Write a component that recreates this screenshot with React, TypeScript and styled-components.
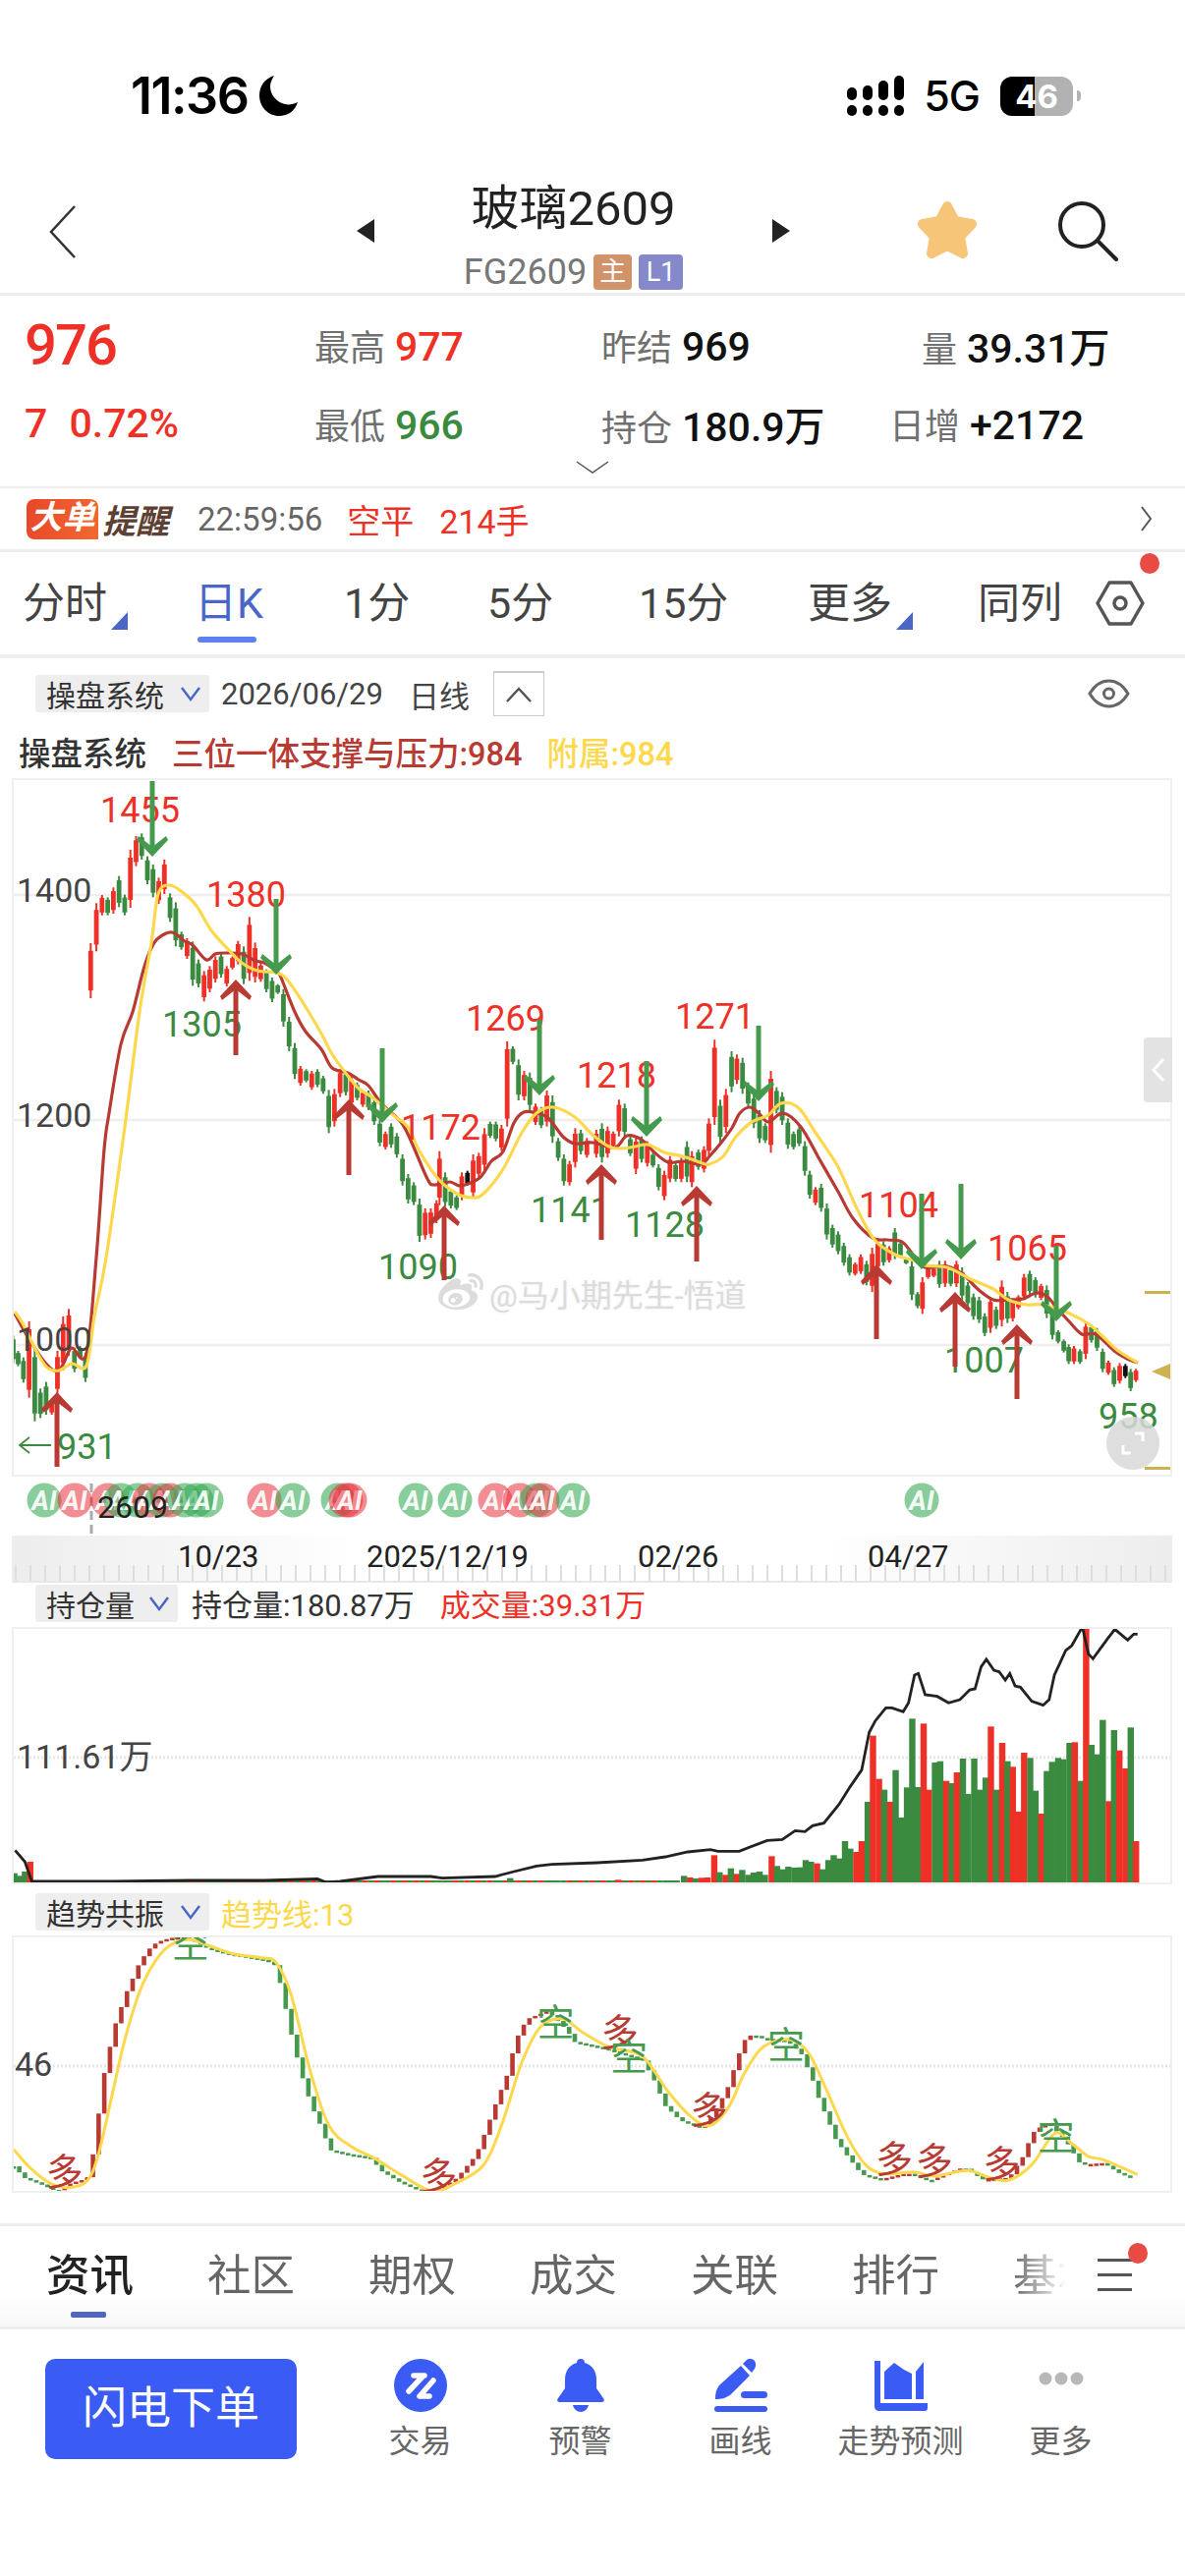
import React from 'react'
import styled, { createGlobalStyle } from 'styled-components'
import { FaWeibo } from 'react-icons/fa'

const RED = '#ee3026'
const GREEN = '#3a8a40'
const ARROW_RED = '#b83a33'
const ARROW_GREEN = '#459a4d'
const YELLOW = '#fdd84d'
const BLUE = '#3a5cf5'
const LINE = '#eeeeee'
const FONT = `Roboto, "Noto Sans CJK SC", sans-serif`

const GlobalStyle = createGlobalStyle`
  html, body { margin: 0; padding: 0; background: #fff; }
  body { font-family: ${FONT}; }
`

type Row = [string, number, number, number]
type Pt = [number, number]

const barColor = (c: string) => (c === 'r' ? RED : c === 'g' ? GREEN : '#111')

// candles read off the chart, [colour, x, top, bottom] in crop units
const part1: Row[] = [
  ['g', 35, 238, 322], ['g', 48, 285, 332], ['g', 62, 305, 382], ['r', 77, 195, 428],
  ['g', 92, 280, 500], ['g', 107, 400, 490], ['g', 122, 380, 480], ['r', 137, 430, 480],
  ['r', 152, 285, 420], ['r', 167, 180, 345], ['r', 182, 157, 300], ['g', 197, 275, 350],
  ['g', 212, 270, 310], ['g', 226, 290, 380],
]
const part2: Row[] = [
  ['r', 240, 540, 708], ['r', 255, 418, 565], ['r', 270, 393, 455], ['g', 285, 400, 455],
  ['r', 300, 370, 450], ['g', 315, 335, 430], ['g', 330, 392, 455], ['r', 345, 255, 432],
  ['r', 360, 213, 305], ['g', 375, 205, 285], ['g', 390, 275, 360], ['g', 405, 300, 400],
  ['r', 420, 340, 420], ['r', 435, 285, 390], ['g', 450, 388, 475], ['g', 465, 415, 550],
  ['g', 480, 505, 560], ['r', 495, 525, 588], ['g', 510, 535, 670], ['g', 525, 590, 675],
  ['r', 540, 625, 718], ['r', 555, 610, 690], ['r', 570, 580, 660], ['g', 585, 570, 645],
  ['r', 600, 610, 672], ['r', 615, 580, 620], ['r', 630, 533, 605], ['g', 645, 550, 665],
  ['r', 660, 460, 655], ['r', 675, 538, 660], ['r', 690, 600, 658], ['g', 705, 620, 690],
  ['g', 720, 645, 720], ['g', 735, 665, 695], ['g', 750, 680, 795], ['g', 765, 765, 870],
  ['g', 780, 845, 955], ['r', 795, 915, 975], ['g', 810, 925, 965], ['r', 825, 930, 988],
  ['g', 840, 925, 980], ['g', 855, 945, 1000], ['g', 870, 988, 1120], ['r', 885, 985, 1100],
  ['r', 900, 925, 1010], ['g', 915, 930, 1005], ['r', 930, 945, 1040], ['g', 945, 965, 1020],
  ['r', 960, 990, 1040], ['g', 975, 990, 1050], ['g', 990, 1015, 1095], ['g', 1005, 1080, 1160],
  ['r', 1020, 1115, 1170], ['g', 1035, 1090, 1165], ['g', 1050, 1120, 1195], ['g', 1065, 1185, 1280],
  ['g', 1080, 1245, 1335], ['g', 1095, 1270, 1340], ['g', 1110, 1320, 1452], ['r', 1125, 1350, 1445],
  ['r', 1140, 1350, 1440], ['r', 1155, 1325, 1395], ['r', 1163, 1175, 1340], ['g', 1178, 1240, 1345],
  ['g', 1193, 1290, 1350], ['g', 1208, 1310, 1355], ['r', 1222, 1240, 1325], ['k', 1237, 1235, 1280],
  ['r', 1252, 1185, 1320], ['r', 1267, 1180, 1255], ['r', 1282, 1105, 1235], ['g', 1297, 1085, 1135],
  ['g', 1312, 1085, 1145], ['r', 1327, 1095, 1175], ['r', 1342, 840, 1100], ['g', 1357, 855, 910],
  ['g', 1372, 895, 1020], ['r', 1387, 930, 1020], ['g', 1402, 935, 1050], ['r', 1417, 1030, 1095],
  ['g', 1432, 1040, 1105], ['r', 1447, 990, 1100], ['g', 1462, 1005, 1150], ['g', 1477, 1135, 1205],
  ['g', 1492, 1185, 1280], ['r', 1507, 1205, 1280], ['r', 1522, 1105, 1225], ['g', 1537, 1110, 1185],
  ['r', 1553, 1135, 1195],
]
const part3: Row[] = [
  ['r', 10, 1110, 1195], ['g', 25, 1090, 1210], ['r', 40, 1100, 1195], ['r', 55, 1115, 1165],
  ['r', 70, 1018, 1130], ['g', 85, 1030, 1130], ['g', 100, 1130, 1190], ['r', 115, 1130, 1245],
  ['g', 130, 1130, 1210], ['r', 145, 1145, 1222], ['g', 160, 1180, 1225], ['g', 175, 1215, 1295],
  ['r', 190, 1235, 1325], ['r', 205, 1190, 1270], ['g', 220, 1210, 1268], ['r', 235, 1195, 1270],
  ['g', 250, 1145, 1270], ['r', 263, 1175, 1285], ['g', 280, 1170, 1232], ['r', 295, 1160, 1240],
  ['r', 308, 1075, 1190], ['r', 323, 835, 1095], ['g', 338, 1018, 1150], ['r', 353, 985, 1120],
  ['g', 368, 870, 995], ['r', 382, 880, 970], ['g', 397, 890, 1000], ['g', 412, 965, 1040],
  ['g', 427, 1000, 1105], ['g', 442, 1050, 1150], ['g', 457, 1090, 1150], ['r', 472, 930, 1180],
  ['g', 487, 980, 1060], ['g', 502, 995, 1095], ['g', 517, 1075, 1168], ['g', 532, 1115, 1170],
  ['g', 547, 1100, 1160], ['g', 562, 1145, 1250], ['g', 575, 1235, 1320], ['r', 590, 1285, 1340],
  ['g', 605, 1275, 1360], ['g', 620, 1335, 1445], ['g', 635, 1400, 1470], ['g', 650, 1420, 1490],
]
const part4: Row[] = [
  ['g', 665, -45, 25], ['g', 680, -10, 55], ['r', 695, 15, 55], ['r', 710, -10, 50],
  ['g', 725, 10, 85], ['r', 740, -30, 105], ['r', 755, -55, 40], ['g', 770, -50, 25],
  ['r', 785, -35, 15], ['g', 800, -90, 5], ['g', 815, -50, 0], ['g', 830, 0, 20],
  ['g', 845, 10, 130], ['g', 860, 105, 155], ['r', 873, 60, 172], ['r', 888, 25, 65],
  ['r', 903, 30, 60], ['g', 918, 10, 92], ['r', 933, 10, 90], ['g', 948, 30, 88],
  ['r', 963, 10, 90], ['g', 978, 30, 130], ['g', 993, 75, 150], ['g', 1008, 110, 190],
  ['g', 1023, 120, 200], ['g', 1038, 170, 240], ['r', 1053, 120, 230], ['g', 1068, 150, 218],
  ['r', 1083, 70, 210], ['g', 1098, 105, 200], ['r', 1112, 125, 195], ['r', 1127, 115, 158],
  ['r', 1142, 50, 130], ['g', 1157, 40, 112], ['g', 1172, 60, 122], ['r', 1187, 80, 130],
  ['g', 1202, 85, 185], ['g', 1217, 150, 250], ['g', 1232, 222, 262], ['g', 1247, 250, 290],
  ['g', 1260, 265, 325], ['r', 1274, 270, 325], ['g', 1290, 280, 325], ['r', 1305, 195, 310],
  ['g', 1320, 205, 260], ['g', 1335, 215, 285], ['g', 1350, 278, 350], ['r', 1365, 315, 358],
  ['g', 1380, 335, 395], ['r', 1395, 322, 385], ['k', 1410, 325, 368], ['g', 1424, 340, 408],
  ['r', 1438, 340, 380],
]

const toCandles = (rows: Row[], x0: number, y0: number) =>
  rows.map(([c, x, t, b]) => ({ c, x: x0 + x / 2.6, t: y0 + t / 3, b: y0 + b / 3 }))

const candles = [
  ...toCandles(part1, 0, 1280),
  ...toCandles(part2, 0, 780),
  ...toCandles(part3, 603, 780),
  ...toCandles(part4, 603, 1280),
]

const redMa: Pt[] = [
  [15, 1337], [29, 1362], [46, 1387], [58, 1396], [65, 1387], [73, 1372], [88, 1378], [98, 1280],
  [106, 1170], [111, 1133], [123, 1063], [135, 1030], [146, 987], [154, 965], [161, 955], [175, 949],
  [188, 958], [196, 962], [210, 977], [219, 971], [231, 970], [246, 971], [260, 978], [269, 980],
  [283, 990], [288, 1000], [300, 1030], [311, 1050], [327, 1068], [338, 1087], [354, 1092], [365, 1099],
  [375, 1105], [388, 1123], [408, 1142], [419, 1163], [435, 1200], [442, 1206], [458, 1203], [469, 1207],
  [488, 1199], [500, 1182], [512, 1172], [523, 1143], [533, 1132], [546, 1133], [558, 1138], [573, 1157],
  [585, 1164], [603, 1163], [626, 1168], [638, 1156], [653, 1160], [666, 1173], [680, 1183], [695, 1182],
  [713, 1185], [722, 1177], [734, 1163], [745, 1148], [753, 1133], [763, 1127], [772, 1133], [782, 1142],
  [797, 1133], [815, 1147], [834, 1180], [853, 1213], [868, 1240], [888, 1260], [903, 1262], [918, 1264],
  [930, 1278], [941, 1290], [964, 1289], [980, 1297], [995, 1312], [1011, 1323], [1026, 1323], [1041, 1322],
  [1055, 1316], [1066, 1320], [1076, 1332], [1088, 1345], [1101, 1358], [1115, 1358], [1134, 1375], [1147, 1383],
  [1158, 1387],
]

const yellowMa: Pt[] = [
  [15, 1335], [23, 1347], [38, 1377], [48, 1392], [60, 1395], [73, 1388], [88, 1390], [96, 1340],
  [108, 1280], [127, 1147], [142, 1030], [154, 960], [161, 910], [173, 901], [188, 910], [200, 922],
  [215, 947], [231, 965], [246, 980], [262, 988], [281, 990], [292, 997], [308, 1020], [327, 1052],
  [338, 1073], [354, 1095], [365, 1108], [379, 1117], [400, 1135], [415, 1147], [427, 1172], [446, 1200],
  [465, 1215], [481, 1219], [492, 1215], [512, 1190], [531, 1153], [546, 1133], [563, 1127], [585, 1137],
  [603, 1155], [622, 1168], [641, 1168], [659, 1165], [676, 1173], [695, 1177], [715, 1184], [722, 1185],
  [736, 1177], [749, 1157], [765, 1142], [782, 1135], [795, 1123], [813, 1128], [830, 1153], [853, 1188],
  [872, 1230], [890, 1262], [911, 1277], [930, 1283], [941, 1288], [964, 1290], [988, 1302], [1011, 1312],
  [1026, 1323], [1045, 1328], [1061, 1328], [1084, 1335], [1107, 1347], [1122, 1360], [1138, 1375], [1158, 1387],
]

const smooth = (pts: Pt[]) => {
  let d = `M${pts[0][0]} ${pts[0][1]}`
  for (let i = 0; i < pts.length - 1; i++) {
    const p0 = pts[Math.max(i - 1, 0)]
    const p1 = pts[i]
    const p2 = pts[i + 1]
    const p3 = pts[Math.min(i + 2, pts.length - 1)]
    const c1x = p1[0] + (p2[0] - p0[0]) / 6
    const c1y = p1[1] + (p2[1] - p0[1]) / 6
    const c2x = p2[0] - (p3[0] - p1[0]) / 6
    const c2y = p2[1] - (p3[1] - p1[1]) / 6
    d += `C${c1x.toFixed(1)} ${c1y.toFixed(1)} ${c2x.toFixed(1)} ${c2y.toFixed(1)} ${p2[0]} ${p2[1]}`
  }
  return d
}

const downArrows = [
  [155, 795, 872], [281, 915, 992], [389, 1067, 1143], [549, 1038, 1115], [658, 1080, 1157],
  [772, 1044, 1121], [938, 1215, 1292], [978, 1205, 1282], [1075, 1268, 1345],
]
const upArrows = [
  [58, 1417, 1493], [240, 997, 1074], [355, 1119, 1196], [452, 1227, 1303], [612, 1185, 1262],
  [709, 1207, 1284], [892, 1287, 1363], [972, 1315, 1391], [1035, 1348, 1424],
]
const priceLabels: [string, number, number, boolean][] = [
  ['1455', 102, 837, true], ['1380', 210, 923, true], ['1305', 165, 1055, false], ['1269', 474, 1049, true],
  ['1172', 408, 1160, true], ['1090', 385, 1302, false], ['1141', 540, 1244, false], ['1218', 587, 1107, true],
  ['1271', 687, 1047, true], ['1128', 636, 1259, false], ['1104', 874, 1239, true], ['1065', 1005, 1283, true],
  ['1007', 961, 1397, false], ['958', 1118, 1454, false], ['931', 58, 1485, false],
]

const aiMarks: [number, boolean][] = [
  [45, true], [76, false], [110, false], [123, true], [140, true], [152, false], [165, true], [173, false],
  [188, true], [200, true], [210, true], [269, false], [298, true], [344, true], [352, false], [356, false],
  [423, true], [463, true], [504, false], [529, false], [546, true], [552, false], [583, true], [938, true],
]

// volume bars, [colour, x, top] in crop units
const volumeBars: [string, number, number][] = [
  ['g', 19, 860], ['g', 26, 868], ['g', 33, 855], ['r', 40, 825], ['g', 675, 875], ['r', 818, 880], ['g', 905, 868],
  ['r', 913, 873], ['g', 920, 876], ['r', 928, 874], ['r', 936, 873], ['r', 945, 805], ['g', 952, 857], ['r', 960, 865],
  ['g', 967, 845], ['r', 975, 862], ['g', 982, 850], ['g', 990, 865], ['g', 997, 858], ['g', 1005, 855],
  ['g', 1012, 865], ['r', 1021, 808], ['g', 1028, 838], ['g', 1036, 848], ['g', 1043, 840], ['g', 1051, 843],
  ['g', 1058, 842], ['g', 1066, 820], ['g', 1073, 825], ['r', 1081, 830], ['g', 1088, 848], ['g', 1096, 820],
  ['g', 1103, 805], ['g', 1110, 815], ['g', 1118, 762], ['g', 1125, 785], ['r', 1133, 795], ['r', 1140, 762],
  ['g', 1148, 642], ['r', 1155, 440], ['r', 1163, 572], ['g', 1170, 605], ['r', 1178, 642], ['g', 1185, 545],
  ['g', 1192, 690], ['g', 1200, 598], ['g', 1207, 388], ['g', 1214, 597], ['r', 1222, 403], ['r', 1229, 605],
  ['g', 1237, 522], ['g', 1244, 518], ['r', 1252, 578], ['g', 1259, 585], ['r', 1266, 552], ['g', 1274, 510],
  ['g', 1281, 618], ['g', 1289, 510], ['g', 1296, 605], ['g', 1304, 568], ['r', 1311, 412], ['g', 1318, 605],
  ['r', 1326, 462], ['g', 1333, 518], ['r', 1340, 535], ['r', 1348, 672], ['r', 1355, 492], ['g', 1363, 508],
  ['g', 1370, 608], ['r', 1378, 678], ['g', 1385, 548], ['g', 1392, 520], ['g', 1400, 508], ['g', 1407, 512],
  ['g', 1415, 462], ['r', 1422, 460], ['g', 1430, 578], ['r', 1437, 112], ['g', 1444, 468], ['g', 1452, 497],
  ['g', 1459, 392], ['r', 1467, 640], ['g', 1474, 423], ['r', 1481, 485], ['r', 1489, 540], ['g', 1496, 415],
  ['r', 1503, 762],
]

const tinyBars = Array.from({ length: 115 }, (_, i) => ({
  x: (48 + i * 7.5) / 1.3,
  c: (i * 7 + (i >> 2)) % 5 < 2 ? 'r' : 'g',
})).filter((b) => b.x < 692)

const holdLine: Pt[] = [
  [20, 790], [33, 825], [42, 885], [150, 885], [250, 882], [350, 882], [420, 877], [432, 888], [450, 885],
  [500, 870], [570, 870], [585, 875], [655, 870], [680, 855], [710, 838], [730, 833], [790, 828], [850, 820],
  [880, 810], [910, 795], [940, 788], [950, 793], [978, 793], [1015, 760], [1035, 757], [1052, 730], [1065, 733],
  [1075, 715], [1090, 707], [1110, 650], [1125, 595], [1140, 545], [1150, 430], [1158, 395], [1172, 355],
  [1180, 355], [1195, 367], [1202, 340], [1210, 255], [1215, 250], [1224, 315], [1240, 320], [1255, 340],
  [1270, 330], [1283, 300], [1290, 297], [1298, 230], [1305, 207], [1315, 240], [1322, 245], [1330, 270],
  [1336, 250], [1343, 288], [1350, 292], [1365, 335], [1380, 347], [1388, 330], [1395, 255], [1402, 220],
  [1410, 180], [1418, 165], [1432, 108], [1440, 190], [1446, 205], [1465, 145], [1475, 115], [1492, 148],
  [1500, 130], [1505, 130],
]

const trendCurve: Pt[] = [
  [18, 855], [32, 890], [55, 910], [75, 932], [95, 905], [115, 893], [125, 800], [132, 665], [138, 570], [145, 495],
  [152, 425], [160, 372], [167, 325], [175, 285], [182, 245], [190, 215], [198, 190], [208, 170], [225, 158], [240, 155],
  [255, 165], [275, 190], [300, 205], [320, 212], [345, 222], [362, 235], [368, 270], [375, 340], [382, 420], [390, 495],
  [397, 560], [405, 620], [412, 670], [420, 710], [428, 750], [435, 805], [460, 818], [490, 828], [505, 870], [530, 905],
  [555, 930], [575, 935], [605, 890], [630, 820], [642, 750], [650, 700], [658, 650], [665, 610], [672, 570], [680, 490],
  [688, 440], [698, 405], [725, 380], [750, 440], [760, 475], [800, 495], [850, 530], [865, 590], [880, 670], [900, 715],
  [930, 740], [945, 690], [962, 620], [970, 565], [978, 510], [985, 470], [995, 452], [1010, 465], [1040, 470], [1060, 510],
  [1075, 590], [1085, 660], [1095, 710], [1105, 770], [1120, 820], [1140, 880], [1165, 895], [1200, 875], [1230, 900],
  [1255, 875], [1275, 858], [1300, 895], [1335, 890], [1355, 820], [1365, 755], [1385, 720], [1408, 770], [1430, 850],
  [1460, 845], [1480, 875], [1505, 900],
]

const trendYellow: Pt[] = [
  [18, 803], [40, 860], [65, 905], [90, 920], [115, 900], [130, 820], [150, 620], [165, 470], [185, 320], [205, 230],
  [225, 180], [250, 163], [275, 180], [310, 207], [345, 218], [365, 232], [385, 330], [410, 560], [435, 730], [465, 795],
  [495, 830], [530, 880], [570, 930], [600, 910], [640, 850], [665, 720], [690, 540], [715, 430], [745, 405], [770, 445],
  [805, 490], [835, 505], [855, 530], [885, 630], [915, 705], [940, 730], [965, 670], [985, 570], [1010, 490], [1045, 468],
  [1070, 510], [1095, 630], [1120, 760], [1145, 850], [1170, 878], [1210, 872], [1235, 885], [1280, 868], [1310, 890],
  [1335, 897], [1365, 850], [1395, 755], [1415, 780], [1440, 825], [1460, 835], [1505, 880],
]

const curveAt = (x: number) => {
  for (let i = 0; i < trendCurve.length - 1; i++) {
    const [x1, y1] = trendCurve[i]
    const [x2, y2] = trendCurve[i + 1]
    if (x >= x1 && x <= x2) return y1 + ((y2 - y1) * (x - x1)) / (x2 - x1)
  }
  return trendCurve[trendCurve.length - 1][1]
}

const trendSteps = Array.from({ length: 198 }, (_, i) => {
  const X = 18 + i * 7.5
  const cur = curveAt(X)
  const prev = curveAt(Math.max(X - 7.5, 18))
  return { x: X / 1.3, top: 1920 + Math.min(cur, prev) / 3, h: Math.abs(cur - prev) / 3, up: cur < prev }
})

const trendMarks: [string, number, number][] = [
  ['多', 85, 862], ['多', 580, 875], ['多', 820, 435], ['多', 938, 672], ['多', 1183, 822], ['多', 1236, 830], ['多', 1325, 838],
  ['空', 252, 165], ['空', 735, 405], ['空', 832, 510], ['空', 1040, 475], ['空', 1397, 755],
]

const toPage = (pts: Pt[], y0: number): Pt[] => pts.map(([x, y]) => [x / 1.3, y0 + y / 3])

const Page = styled.div`
  position: relative;
  width: 1206px;
  height: 2622px;
  background: #fff;
  overflow: hidden;
  color: #222;
`

/* status bar */
const StatusBar = styled.div`
  height: 130px;
  box-sizing: border-box;
  padding: 77px 114px 0 133px;
  display: flex;
  justify-content: space-between;
`
const TimeGroup = styled.div`
  display: flex;
  align-items: center;
  height: 41px;
  gap: 12px;
`
const Clock = styled.span`
  font: 600 52px/41px Inter, sans-serif;
  letter-spacing: -1.5px;
  color: #000;
`
const StatusIcons = styled.div`
  display: flex;
  align-items: center;
  height: 41px;
`
const FiveG = styled.span`
  font: 500 43px/41px Inter, sans-serif;
  letter-spacing: -1px;
  margin: 0 21px 0 20px;
  color: #000;
`
const Battery = styled.div`
  position: relative;
  width: 74px;
  height: 40px;
  border-radius: 12px;
  background: linear-gradient(90deg, #000 0, #000 47%, #b2b2b2 47%, #b2b2b2 100%);
  color: #fff;
  font: 700 33px/40px Inter, sans-serif;
  text-align: center;
  &::after {
    content: '';
    position: absolute;
    left: 78px;
    top: 14px;
    width: 4px;
    height: 11px;
    border-radius: 0 5px 5px 0;
    background: #b2b2b2;
  }
`

/* navigation */
const NavBar = styled.div`
  height: 168px;
  border-bottom: 3px solid ${LINE};
  display: grid;
  grid-template-columns: 363px 441px 1fr;
  align-items: start;
`
const NavLeft = styled.div`
  padding: 78px 0 0 50px;
`
const NavCentre = styled.div`
  display: flex;
  justify-content: space-between;
  padding-top: 93px;
`
const TitleBlock = styled.div`
  margin-top: -40px;
  display: flex;
  flex-direction: column;
  align-items: center;
`
const Title = styled.div`
  font-size: 49px;
  line-height: 60px;
  color: #222;
  white-space: nowrap;
`
const SubTitle = styled.div`
  display: flex;
  align-items: center;
  gap: 4px;
  height: 38px;
  margin-top: 15px;
  font-size: 36px;
  color: #777;
`
const Badge = styled.span<{ $bg: string; $w: number }>`
  width: ${(p) => p.$w}px;
  height: 36px;
  margin-left: 3px;
  border-radius: 4px;
  background: ${(p) => p.$bg};
  color: #fff;
  font-size: 27px;
  line-height: 36px;
  text-align: center;
`
const NavRight = styled.div`
  display: flex;
  align-items: flex-start;
  gap: 81px;
  padding: 74px 0 0 129px;
`

/* quote */
const Quote = styled.div`
  height: 194px;
  border-bottom: 2px solid ${LINE};
  position: relative;
`
const QuoteRow = styled.div<{ $h: number }>`
  display: grid;
  grid-template-columns: 295px 292px 293px 1fr;
  padding-left: 25px;
  height: ${(p) => p.$h}px;
  align-items: center;
  white-space: nowrap;
`
const Price = styled.span`
  font-size: 58px;
  font-weight: 500;
  letter-spacing: -2px;
  color: ${RED};
`
const Change = styled.span`
  font-size: 41px;
  font-weight: 500;
  color: ${RED};
  word-spacing: 12px;
`
const Stat = styled.div<{ $indent?: number }>`
  margin-left: ${(p) => p.$indent ?? 0}px;
  display: flex;
  align-items: baseline;
  gap: 10px;
`
const StatLabel = styled.span`
  font-size: 36px;
  color: #707070;
`
const StatValue = styled.span<{ $tone?: string }>`
  font-size: 41px;
  font-weight: 500;
  color: ${(p) => p.$tone ?? '#111'};
`
const MoreChevron = styled.div`
  display: flex;
  justify-content: center;
  padding-top: 16px;
`

/* alert */
const AlertRow = styled.div`
  height: 62px;
  border-bottom: 3px solid ${LINE};
  display: flex;
  align-items: center;
  padding: 0 33px 0 27px;
`
const AlertBadge = styled.span`
  width: 73px;
  height: 41px;
  line-height: 38px;
  text-align: center;
  border-radius: 8px 8px 0 8px;
  background: linear-gradient(100deg, #e8472a, #f2692f);
  color: #fff;
  font-size: 33px;
  font-weight: 700;
  font-style: italic;
`
const AlertName = styled.span`
  margin-left: 4px;
  font-size: 34px;
  font-weight: 700;
  font-style: italic;
  color: #5d4034;
`
const AlertTime = styled.span`
  margin-left: 29px;
  font-size: 33px;
  color: #666;
`
const AlertText = styled.span<{ $gap: number }>`
  margin-left: ${(p) => p.$gap}px;
  font-size: 34px;
  color: ${RED};
`
const Spacer = styled.div`
  flex: 1;
`

/* period tabs */
const PeriodTabs = styled.div`
  position: relative;
  height: 104px;
  border-bottom: 4px solid ${LINE};
  display: grid;
  grid-template-columns: 175px 152px 146px 154px 172px 173px 120px 1fr;
  padding-left: 23px;
  align-items: center;
`
const PeriodTab = styled.div<{ $active?: boolean; $corner?: boolean }>`
  position: relative;
  justify-self: start;
  font-size: 43px;
  line-height: 104px;
  white-space: nowrap;
  color: ${(p) => (p.$active ? '#4a66c6' : '#444')};
  &::before {
    content: '';
    display: ${(p) => (p.$active ? 'block' : 'none')};
    position: absolute;
    left: 3px;
    right: 7px;
    bottom: 12px;
    height: 6px;
    border-radius: 3px;
    background: #5b82ee;
  }
  &::after {
    content: '';
    display: ${(p) => (p.$corner ? 'block' : 'none')};
    position: absolute;
    right: -21px;
    top: 61px;
    border-style: solid;
    border-width: 0 0 18px 17px;
    border-color: transparent transparent #4a66c6 transparent;
  }
`
const HexSlot = styled.div`
  position: relative;
  display: flex;
`
const RedDot = styled.span<{ $left: number; $top: number }>`
  position: absolute;
  left: ${(p) => p.$left}px;
  top: ${(p) => p.$top}px;
  width: 20px;
  height: 21px;
  border-radius: 50%;
  background: #e84b43;
`

/* indicator heads */
const IndicatorBar = styled.div`
  position: relative;
  height: 66px;
  box-sizing: border-box;
  padding: 6px 0 0 36px;
  display: flex;
  align-items: center;
  white-space: nowrap;
`
const Chip = styled.div<{ $w: number }>`
  width: ${(p) => p.$w}px;
  height: 38px;
  box-sizing: border-box;
  padding-left: 11px;
  border-radius: 3px;
  background: #eeeeee;
  display: flex;
  align-items: center;
  justify-content: space-between;
  padding-right: 8px;
  font-size: 30px;
  color: #333;
`
const HeadText = styled.span<{ $gap: number; $tone?: string }>`
  margin-left: ${(p) => p.$gap}px;
  font-size: 31px;
  color: ${(p) => p.$tone ?? '#444'};
`
const FoldButton = styled.div`
  margin-left: 24px;
  width: 52px;
  height: 46px;
  border: 1px solid #ccc;
  border-top-width: 2px;
  box-sizing: border-box;
  display: flex;
  align-items: center;
  justify-content: center;
`
const EyeSlot = styled.div`
  margin-left: auto;
  margin-right: 56px;
  display: flex;
`
const Legend = styled.div`
  height: 56px;
  padding: 0 0 0 19px;
  box-sizing: border-box;
  display: flex;
  align-items: center;
  white-space: nowrap;
  font-size: 32.5px;
`
const LegendItem = styled.span<{ $tone: string; $gap: number }>`
  margin-left: ${(p) => p.$gap}px;
  color: ${(p) => p.$tone};
  font-weight: 500;
`

/* charts */
const ChartBox = styled.div<{ $h: number }>`
  position: relative;
  box-sizing: border-box;
  margin-left: 12px;
  width: 1181px;
  height: ${(p) => p.$h}px;
  border: 2px solid #efefef;
  & > svg {
    display: block;
    width: 100%;
    height: 100%;
  }
`
const AxisLabel = styled.text`
  font-family: ${FONT};
  font-size: 34px;
  fill: #444;
`
const PriceLabel = styled.text<{ $up: boolean }>`
  font-family: ${FONT};
  font-size: 36px;
  fill: ${(p) => (p.$up ? RED : GREEN)};
`
const Watermark = styled.div`
  position: absolute;
  left: 432px;
  top: 499px;
  display: flex;
  align-items: center;
  gap: 6px;
  font-size: 32px;
  color: #dcdcdc;
  text-shadow: 0 0 3px #eee;
  white-space: nowrap;
`
const SideHandle = styled.div`
  position: absolute;
  right: -2px;
  top: 262px;
  width: 29px;
  height: 66px;
  border-radius: 4px 0 0 4px;
  background: #e3e3e3;
  display: flex;
  align-items: center;
  justify-content: center;
`
const ExpandButton = styled.div`
  position: absolute;
  left: 1112px;
  top: 648px;
  width: 54px;
  height: 54px;
  border-radius: 50%;
  background: rgba(216, 216, 216, 0.85);
  display: flex;
  align-items: center;
  justify-content: center;
`
const AiRow = styled.div`
  height: 60px;
  & > svg {
    display: block;
  }
`
const AiText = styled.text`
  font-family: ${FONT};
  font-size: 27px;
  font-weight: 700;
  font-style: italic;
  fill: rgba(255, 255, 255, 0.92);
  text-anchor: middle;
`
const ContractTag = styled.text`
  font-family: ${FONT};
  font-size: 32px;
  fill: #222;
`
const Timeline = styled.div`
  margin-left: 12px;
  width: 1181px;
  height: 48px;
  background: linear-gradient(90deg, #ededed 0, #fff 30%, #fff 70%, #ededed 100%);
  & > svg {
    display: block;
  }
`
const DateTick = styled.text`
  font-family: ${FONT};
  font-size: 31px;
  fill: #222;
`
const VolumeHead = styled.div`
  height: 45px;
  box-sizing: border-box;
  padding: 0 0 4px 36px;
  display: flex;
  align-items: center;
  white-space: nowrap;
`
const TrendHead = styled(VolumeHead)`
  height: 52px;
  padding: 4px 0 0 36px;
`
const TrendMark = styled.text<{ $up: boolean }>`
  font-family: "Noto Sans CJK SC", sans-serif;
  font-size: 38px;
  fill: ${(p) => (p.$up ? ARROW_RED : ARROW_GREEN)};
  text-anchor: middle;
  dominant-baseline: central;
`

/* info tabs */
const InfoTabs = styled.div`
  position: relative;
  margin-top: 31px;
  height: 102px;
  border-top: 3px solid ${LINE};
  border-bottom: 3px solid ${LINE};
  background: linear-gradient(180deg, #fff 0, #fff 70%, #f7f7f7 100%);
`
const InfoScroller = styled.div`
  width: 1085px;
  overflow: hidden;
  padding-left: 47px;
  box-sizing: border-box;
  display: flex;
  gap: 75px;
  -webkit-mask-image: linear-gradient(90deg, #000 0, #000 95%, transparent 100%);
  mask-image: linear-gradient(90deg, #000 0, #000 95%, transparent 100%);
`
const InfoTab = styled.div<{ $active?: boolean }>`
  position: relative;
  flex: none;
  font-size: 44.500px;
  line-height: 102px;
  font-weight: ${(p) => (p.$active ? 500 : 400)};
  color: ${(p) => (p.$active ? '#222' : '#666')};
  &::after {
    content: '';
    display: ${(p) => (p.$active ? 'block' : 'none')};
    position: absolute;
    left: 25px;
    bottom: 9px;
    width: 36px;
    height: 6px;
    border-radius: 2px;
    background: #4f65bf;
  }
`
const MenuIcon = styled.div`
  position: absolute;
  left: 1117px;
  top: 33px;
  width: 35px;
  height: 33px;
  border-top: 3px solid #555;
  border-bottom: 3px solid #555;
  box-sizing: border-box;
  &::before {
    content: '';
    display: block;
    margin-top: 12px;
    height: 3px;
    background: #555;
  }
`

/* footer */
const Footer = styled.div`
  display: flex;
  padding: 30px 0 0 46px;
`
const OrderButton = styled.div`
  width: 256px;
  height: 102px;
  border-radius: 10px;
  background: ${BLUE};
  color: #fff;
  font-size: 45px;
  line-height: 102px;
  text-align: center;
`
const Actions = styled.div`
  display: flex;
  margin-left: 44px;
`
const Action = styled.div`
  width: 163px;
  display: flex;
  flex-direction: column;
  align-items: center;
  gap: 4px;
  font-size: 32px;
  color: #666;
  white-space: nowrap;
  & > svg {
    display: block;
  }
`

const Chevron = () => (
  <svg width="22" height="18" viewBox="0 0 22 18" fill="none">
    <path d="M2 3L11 15L20 3" stroke="#4a66c6" strokeWidth="2.5" />
  </svg>
)

const HoldChart = () => (
  <svg viewBox="14 1658 1177 258" preserveAspectRatio="none">
    <line x1="14" x2="1191" y1="1789" y2="1789" stroke="#e6e6e6" strokeWidth="3" strokeDasharray="2 2" />
    {tinyBars.map((b) => (
      <rect key={b.x} x={b.x - 3} y={1914} width="6" height="2" fill={barColor(b.c)} />
    ))}
    {volumeBars.map(([c, X, Y]) => (
      <rect key={X} x={X / 1.3 - 3.2} y={1620 + Y / 3} width="6.4" height={297 - Y / 3} fill={barColor(c)} />
    ))}
    <polyline
      points={toPage(holdLine, 1620).map((p) => p.join(',')).join(' ')}
      fill="none"
      stroke="#222"
      strokeWidth="2.8"
    />
    <AxisLabel x="17" y="1800">111.61万</AxisLabel>
  </svg>
)

const TrendChart = () => (
  <svg viewBox="14 1972 1177 258" preserveAspectRatio="none">
    <line x1="14" x2="1191" y1="2103" y2="2103" stroke="#e6e6e6" strokeWidth="3" strokeDasharray="2 2" />
    <AxisLabel x="15" y="2113">46</AxisLabel>
    {trendSteps.map((s) => (
      <rect
        key={s.x}
        x={s.x - 2.3}
        y={s.top}
        width="4.6"
        height={Math.max(s.h, 2.5)}
        fill={s.up ? ARROW_RED : ARROW_GREEN}
      />
    ))}
    <path d={smooth(toPage(trendYellow, 1920))} fill="none" stroke={YELLOW} strokeWidth="3" />
    {trendMarks.map(([t, X, Y]) => (
      <TrendMark key={`${X}`} $up={t === '多'} x={X / 1.3} y={1920 + Y / 3}>
        {t}
      </TrendMark>
    ))}
  </svg>
)

const KChart = () => (
  <svg viewBox="14 794 1177 707" preserveAspectRatio="none">
    {[911, 1140, 1369].map((y) => (
      <line key={y} x1="14" x2="1191" y1={y} y2={y} stroke="#eeeeee" strokeWidth="2.5" />
    ))}
    {candles.map((k, i) => {
      const trim = Math.min((k.b - k.t) * 0.14, 8)
      return (
        <g key={i} fill={barColor(k.c)}>
          <rect x={k.x - 1} y={k.t} width="2" height={k.b - k.t} />
          <rect x={k.x - 2.4} y={k.t + trim} width="4.8" height={k.b - k.t - trim * 2} />
        </g>
      )
    })}
    <path d={smooth(redMa)} fill="none" stroke={ARROW_RED} strokeWidth="3.2" />
    <path d={smooth(yellowMa)} fill="none" stroke={YELLOW} strokeWidth="3.2" />
    <AxisLabel x="17" y="918">1400</AxisLabel>
    <AxisLabel x="17" y="1147">1200</AxisLabel>
    <AxisLabel x="17" y="1375">1000</AxisLabel>
    {priceLabels.map(([t, x, y, up]) => (
      <PriceLabel key={t} $up={up} x={x} y={y}>
        {t}
      </PriceLabel>
    ))}
    <path d="M52 1471H20M30 1463L20 1471L30 1479" fill="none" stroke={GREEN} strokeWidth="1.8" />
    {downArrows.map(([x, top, tip]) => (
      <g key={x} fill={ARROW_GREEN}>
        <rect x={x - 2.5} y={top} width="5" height={tip - top - 8} />
        <polygon
          points={`${x},${tip} ${x - 16},${tip - 17} ${x - 14},${tip - 21} ${x},${tip - 10} ${x + 14},${tip - 21} ${x + 16},${tip - 17}`}
        />
      </g>
    ))}
    {upArrows.map(([x, tip, bottom]) => (
      <g key={x} fill={ARROW_RED}>
        <rect x={x - 2.5} y={tip + 8} width="5" height={bottom - tip - 8} />
        <polygon
          points={`${x},${tip} ${x - 16},${tip + 17} ${x - 14},${tip + 21} ${x},${tip + 10} ${x + 14},${tip + 21} ${x + 16},${tip + 17}`}
        />
      </g>
    ))}
    <rect x="1165" y="1314" width="26" height="3" fill="#cdb24f" />
    <rect x="1165" y="1493" width="26" height="3" fill="#cdb24f" />
    <polygon points="1172,1396 1191,1388 1191,1404" fill="#cdb24f" />
  </svg>
)

export default function App() {
  return (
    <Page>
      <GlobalStyle />
      <StatusBar>
        <TimeGroup>
          <Clock>11:36</Clock>
          <svg width="39" height="41" viewBox="0 0 39 41">
            <path d="M15 0C5 3 0 11 0 20C0 32 9 41 20 41C29 41 36 36 39 27C35 29 30 30 26 29C17 27 11 19 11 11C11 7 13 3 15 0Z" fill="#000" />
          </svg>
        </TimeGroup>
        <StatusIcons>
          <svg width="58" height="41" viewBox="0 0 58 41" fill="#000">
            <rect x="0" y="12" width="10" height="13" rx="5" />
            <rect x="16" y="10" width="10" height="15" rx="5" />
            <rect x="32" y="5" width="10" height="20" rx="5" />
            <rect x="48" y="0" width="10" height="25" rx="5" />
            <rect x="0" y="30" width="10" height="11" rx="5" />
            <rect x="16" y="30" width="10" height="11" rx="5" />
            <rect x="32" y="30" width="10" height="11" rx="5" />
            <rect x="48" y="30" width="10" height="11" rx="5" />
          </svg>
          <FiveG>5G</FiveG>
          <Battery>46</Battery>
        </StatusIcons>
      </StatusBar>

      <NavBar>
        <NavLeft>
          <svg width="28" height="56" viewBox="0 0 28 56" fill="none">
            <path d="M26 2L2 28L26 54" stroke="#333" strokeWidth="2.5" />
          </svg>
        </NavLeft>
        <NavCentre>
          <svg width="18" height="24" viewBox="0 0 18 24">
            <polygon points="18,0 18,24 0,12" fill="#222" />
          </svg>
          <TitleBlock>
            <Title>玻璃2609</Title>
            <SubTitle>
              FG2609
              <Badge $bg="#d2926a" $w={39}>主</Badge>
              <Badge $bg="#8589c9" $w={45}>L1</Badge>
            </SubTitle>
          </TitleBlock>
          <svg width="18" height="24" viewBox="0 0 18 24">
            <polygon points="0,0 0,24 18,12" fill="#222" />
          </svg>
        </NavCentre>
        <NavRight>
          <svg width="62" height="62" viewBox="0 0 62 62">
            <polygon
              points="31,6 39,21 56,24 44,37 47,54 31,46 15,54 18,37 6,24 23,21"
              fill="#f6c578"
              stroke="#f6c578"
              strokeWidth="10"
              strokeLinejoin="round"
            />
          </svg>
          <svg width="62" height="62" viewBox="0 0 62 62" fill="none" stroke="#222" strokeWidth="4">
            <circle cx="25" cy="25" r="22" />
            <path d="M41 41L60 60" strokeLinecap="round" />
          </svg>
        </NavRight>
      </NavBar>

      <Quote>
        <QuoteRow $h={100}>
          <Price>976</Price>
          <Stat>
            <StatLabel>最高</StatLabel>
            <StatValue $tone={RED}>977</StatValue>
          </Stat>
          <Stat>
            <StatLabel>昨结</StatLabel>
            <StatValue>969</StatValue>
          </Stat>
          <Stat $indent={33}>
            <StatLabel>量</StatLabel>
            <StatValue>39.31万</StatValue>
          </Stat>
        </QuoteRow>
        <QuoteRow $h={52}>
          <Change>7 0.72%</Change>
          <Stat>
            <StatLabel>最低</StatLabel>
            <StatValue $tone={GREEN}>966</StatValue>
          </Stat>
          <Stat>
            <StatLabel>持仓</StatLabel>
            <StatValue>180.9万</StatValue>
          </Stat>
          <Stat>
            <StatLabel>日增</StatLabel>
            <StatValue>+2172</StatValue>
          </Stat>
        </QuoteRow>
        <MoreChevron>
          <svg width="34" height="14" viewBox="0 0 34 14" fill="none">
            <path d="M1 1L17 12L33 1" stroke="#555" strokeWidth="1.5" />
          </svg>
        </MoreChevron>
      </Quote>

      <AlertRow>
        <AlertBadge>大单</AlertBadge>
        <AlertName>提醒</AlertName>
        <AlertTime>22:59:56</AlertTime>
        <AlertText $gap={25}>空平</AlertText>
        <AlertText $gap={26}>214手</AlertText>
        <Spacer />
        <svg width="12" height="26" viewBox="0 0 12 26" fill="none">
          <path d="M1 1L10 13L1 25" stroke="#555" strokeWidth="2" />
        </svg>
      </AlertRow>

      <PeriodTabs>
        <PeriodTab $corner>分时</PeriodTab>
        <PeriodTab $active>日K</PeriodTab>
        <PeriodTab>1分</PeriodTab>
        <PeriodTab>5分</PeriodTab>
        <PeriodTab>15分</PeriodTab>
        <PeriodTab $corner>更多</PeriodTab>
        <PeriodTab>同列</PeriodTab>
        <HexSlot>
          <svg width="50" height="46" viewBox="0 0 50 46" fill="none" stroke="#555" strokeWidth="3.5">
            <path d="M14 2H36L48 23L36 44H14L2 23Z" strokeLinejoin="round" />
            <circle cx="25" cy="23" r="6" />
          </svg>
          <RedDot $left={45} $top={-28} />
        </HexSlot>
      </PeriodTabs>

      <IndicatorBar>
        <Chip $w={177}>
          操盘系统
          <Chevron />
        </Chip>
        <HeadText $gap={12}>2026/06/29</HeadText>
        <HeadText $gap={26}>日线</HeadText>
        <FoldButton>
          <svg width="26" height="16" viewBox="0 0 26 16" fill="none">
            <path d="M1 15L13 2L25 15" stroke="#555" strokeWidth="2.5" />
          </svg>
        </FoldButton>
        <EyeSlot>
          <svg width="43" height="30" viewBox="0 0 43 30" fill="none" stroke="#666" strokeWidth="3">
            <path d="M2 15C8 5 14 2 21.500 2C29 2 35 5 41 15C35 25 29 28 21.500 28C14 28 8 25 2 15Z" />
            <circle cx="21.500" cy="15" r="5" />
          </svg>
        </EyeSlot>
      </IndicatorBar>
      <Legend>
        <LegendItem $tone="#333" $gap={0}>操盘系统</LegendItem>
        <LegendItem $tone="#b83a33" $gap={26}>三位一体支撑与压力:984</LegendItem>
        <LegendItem $tone={YELLOW} $gap={25}>附属:984</LegendItem>
      </Legend>

      <ChartBox $h={711}>
        <KChart />
        <Watermark>
          <FaWeibo size={46} />
          @马小期先生-悟道
        </Watermark>
        <SideHandle>
          <svg width="14" height="26" viewBox="0 0 14 26" fill="none">
            <path d="M12 2L2 13L12 24" stroke="#fff" strokeWidth="3" />
          </svg>
        </SideHandle>
        <ExpandButton>
          <svg width="24" height="24" viewBox="0 0 24 24" fill="none" stroke="#fff" strokeWidth="3">
            <path d="M14 2H22V10M2 14V22H10" />
          </svg>
        </ExpandButton>
      </ChartBox>

      <AiRow>
        <svg width="1206" height="60" viewBox="0 1503 1206 60">
          <line x1="93" x2="93" y1="1510" y2="1563" stroke="#aaa" strokeWidth="3" strokeDasharray="9 5" />
          {aiMarks.map(([x, up], i) => (
            <g key={i}>
              <circle cx={x} cy="1527" r="17.500" fill={up ? 'rgba(52,168,83,0.58)' : 'rgba(233,48,60,0.55)'} />
              <AiText x={x} y="1537">AI</AiText>
            </g>
          ))}
          <ContractTag x="99" y="1545">2609</ContractTag>
        </svg>
      </AiRow>
      <Timeline>
        <svg width="1181" height="48" viewBox="12 1563 1181 48">
          {Array.from({ length: 79 }, (_, i) => (
            <rect key={i} x={15 + i * 15} y="1593" width="2" height="17" fill="#dedede" />
          ))}
          <rect x="12" y="1609" width="1181" height="2" fill="#e8e8e8" />
          <DateTick x="181" y="1595">10/23</DateTick>
          <DateTick x="373" y="1595">2025/12/19</DateTick>
          <DateTick x="649" y="1595">02/26</DateTick>
          <DateTick x="883" y="1595">04/27</DateTick>
        </svg>
      </Timeline>

      <VolumeHead>
        <Chip $w={145}>
          持仓量
          <Chevron />
        </Chip>
        <HeadText $gap={14} $tone="#333">持仓量:180.87万</HeadText>
        <HeadText $gap={26} $tone={RED}>成交量:39.31万</HeadText>
      </VolumeHead>
      <ChartBox $h={262}>
        <HoldChart />
      </ChartBox>

      <TrendHead>
        <Chip $w={177}>
          趋势共振
          <Chevron />
        </Chip>
        <HeadText $gap={12} $tone={YELLOW}>趋势线:13</HeadText>
      </TrendHead>
      <ChartBox $h={262}>
        <TrendChart />
      </ChartBox>

      <InfoTabs>
        <InfoScroller>
          <InfoTab $active>资讯</InfoTab>
          <InfoTab>社区</InfoTab>
          <InfoTab>期权</InfoTab>
          <InfoTab>成交</InfoTab>
          <InfoTab>关联</InfoTab>
          <InfoTab>排行</InfoTab>
          <InfoTab>基本面</InfoTab>
        </InfoScroller>
        <MenuIcon />
        <RedDot $left={1148} $top={17} />
      </InfoTabs>

      <Footer>
        <OrderButton>闪电下单</OrderButton>
        <Actions>
          <Action>
            <svg width="54" height="54" viewBox="0 0 54 54">
              <circle cx="27" cy="27" r="27" fill={BLUE} />
              <path d="M15 33L29 18M20 17H31M26 38L40 22M26 38H36" stroke="#fff" strokeWidth="5.500" strokeLinecap="round" fill="none" />
            </svg>
            交易
          </Action>
          <Action>
            <svg width="50" height="54" viewBox="0 0 50 54" fill={BLUE}>
              <path d="M25 0C28 0 29 2 29 4C37 6 41 13 41 21V30L48 40C50 43 48 44 46 44H4C2 44 0 43 2 40L9 30V21C9 13 13 6 21 4C21 2 22 0 25 0Z" />
              <path d="M17 47H33C32 51 29 54 25 54C21 54 18 51 17 47Z" />
            </svg>
            预警
          </Action>
          <Action>
            <svg width="54" height="54" viewBox="0 0 54 54" fill={BLUE}>
              <path d="M1 41C1 35 2 30 6 26L27 7L36 17L18 35C13 40 7 41 1 41Z" />
              <path d="M29 5L33 1C36 -1 39 0 41 2C43 5 42 8 41 10L38 14Z" />
              <rect x="27" y="33" width="27" height="7" rx="3.500" />
              <rect x="0" y="48" width="54" height="6" rx="3" />
            </svg>
            画线
          </Action>
          <Action>
            <svg width="54" height="54" viewBox="0 0 54 54" fill={BLUE}>
              <path d="M0 2H6V45H54V50C54 52 53 53 51 53H5C2 53 0 51 0 48Z" />
              <path d="M10 13L20 4L30 11L38 15V41H10Z" />
              <path d="M42 13L50 3V41H42Z" />
            </svg>
            走势预测
          </Action>
          <Action>
            <svg width="54" height="54" viewBox="0 0 54 54" fill="#b8b8b8">
              <circle cx="11" cy="20" r="6.500" />
              <circle cx="27" cy="20" r="6.500" />
              <circle cx="43" cy="20" r="6.500" />
            </svg>
            更多
          </Action>
        </Actions>
      </Footer>
    </Page>
  )
}
